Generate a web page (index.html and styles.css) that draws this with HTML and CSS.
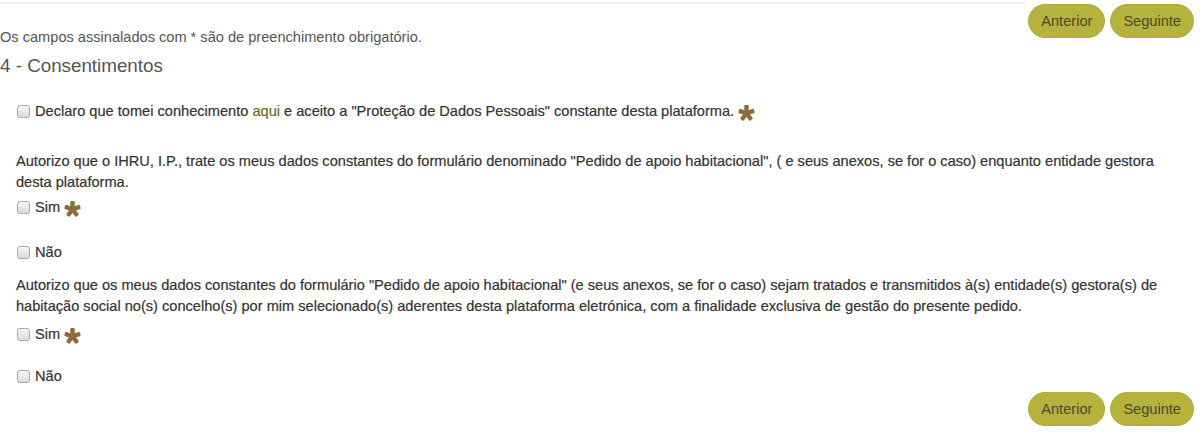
FILE: index.html
```html
<!DOCTYPE html>
<html lang="pt">
<head>
<meta charset="utf-8">
<title>Consentimentos</title>
<link rel="stylesheet" href="styles.css">
</head>
<body>
<div class="page">
  <div class="top">
    <div class="top-main">
      <div class="rule"></div>
      <p class="note">Os campos assinalados com * são de preenchimento obrigatório.</p>
    </div>
    <div class="nav">
      <button class="btn">Anterior</button>
      <button class="btn">Seguinte</button>
    </div>
  </div>

  <h4 class="section-title">4 - Consentimentos</h4>

  <div class="fields">
    <label class="check check-first"><input type="checkbox" class="box">Declaro que tomei conhecimento <a class="link" href="#">aqui</a> e aceito a "Proteção de Dados Pessoais" constante desta plataforma. <svg class="star" viewBox="0 0 20 20" aria-hidden="true"><g transform="translate(10 10.8)"><rect x="-2.6" y="-9.6" width="5.2" height="10" rx="1.4"/><rect x="-2.6" y="-9.6" width="5.2" height="10" rx="1.4" transform="rotate(72)"/><rect x="-2.6" y="-9.6" width="5.2" height="10" rx="1.4" transform="rotate(144)"/><rect x="-2.6" y="-9.6" width="5.2" height="10" rx="1.4" transform="rotate(216)"/><rect x="-2.6" y="-9.6" width="5.2" height="10" rx="1.4" transform="rotate(288)"/></g></svg></label>

    <p class="question q-first">Autorizo que o IHRU, I.P., trate os meus dados constantes do formulário denominado "Pedido de apoio habitacional", ( e seus anexos, se for o caso) enquanto entidade gestora desta plataforma.</p>
    <label class="check check-yes"><input type="checkbox" class="box">Sim <svg class="star" viewBox="0 0 20 20" aria-hidden="true"><g transform="translate(10 10.8)"><rect x="-2.6" y="-9.6" width="5.2" height="10" rx="1.4"/><rect x="-2.6" y="-9.6" width="5.2" height="10" rx="1.4" transform="rotate(72)"/><rect x="-2.6" y="-9.6" width="5.2" height="10" rx="1.4" transform="rotate(144)"/><rect x="-2.6" y="-9.6" width="5.2" height="10" rx="1.4" transform="rotate(216)"/><rect x="-2.6" y="-9.6" width="5.2" height="10" rx="1.4" transform="rotate(288)"/></g></svg></label>
    <label class="check check-no"><input type="checkbox" class="box">Não</label>

    <p class="question q-second">Autorizo que os meus dados constantes do formulário "Pedido de apoio habitacional" (e seus anexos, se for o caso) sejam tratados e transmitidos à(s) entidade(s) gestora(s) de habitação social no(s) concelho(s) por mim selecionado(s) aderentes desta plataforma eletrónica, com a finalidade exclusiva de gestão do presente pedido.</p>
    <label class="check check-yes check-yes-2"><input type="checkbox" class="box">Sim <svg class="star" viewBox="0 0 20 20" aria-hidden="true"><g transform="translate(10 10.8)"><rect x="-2.6" y="-9.6" width="5.2" height="10" rx="1.4"/><rect x="-2.6" y="-9.6" width="5.2" height="10" rx="1.4" transform="rotate(72)"/><rect x="-2.6" y="-9.6" width="5.2" height="10" rx="1.4" transform="rotate(144)"/><rect x="-2.6" y="-9.6" width="5.2" height="10" rx="1.4" transform="rotate(216)"/><rect x="-2.6" y="-9.6" width="5.2" height="10" rx="1.4" transform="rotate(288)"/></g></svg></label>
    <label class="check check-no check-no-2"><input type="checkbox" class="box">Não</label>
  </div>

  <div class="nav nav-bottom">
    <button class="btn">Anterior</button>
    <button class="btn">Seguinte</button>
  </div>
</div>
</body>
</html>
```

FILE: styles.css
```css
html, body {
  margin: 0;
  padding: 0;
  background: #fff;
}

body {
  font-family: "Liberation Sans", Arial, sans-serif;
  font-size: 14.6px;
  line-height: 21px;
  color: #333;
}

.page {
  padding: 0 6px 0 0;
}

.top {
  display: flex;
  align-items: flex-start;
}

.top-main {
  flex: 1;
}

.rule {
  margin-top: 2px;
  height: 2px;
  background: #efefef;
}

.note {
  margin: 24px 0 0;
  font-size: 14.6px;
  line-height: 18px;
  color: #555;
}

.nav {
  display: flex;
  justify-content: flex-end;
  gap: 5px;
  margin: 4px 0 0 2px;
}

.nav-bottom {
  margin-top: 5px;
}

.btn {
  font-family: "Liberation Sans", Arial, sans-serif;
  font-size: 14.6px;
  line-height: 20px;
  height: 34px;
  padding: 6px 12px;
  border: 1px solid #b0ad3a;
  border-radius: 17px;
  background: #b5b23d;
  color: #4a4a2c;
  cursor: pointer;
}

.section-title {
  margin: 10px 0 0;
  font-size: 18.8px;
  line-height: 20px;
  font-weight: normal;
  color: #555;
}

.fields {
  padding: 0 15px 0 16px;
  -webkit-text-stroke: 0.2px #333;
}

.check {
  display: block;
  line-height: 21px;
}

.check-first {
  margin-top: 25px;
}

.check-yes {
  margin-top: 4px;
}

.check-yes-2 {
  margin-top: 7px;
}

.check-no {
  margin-top: 24px;
}

.check-no-2 {
  margin-top: 21px;
}

.question {
  margin: 0;
}

.q-first {
  margin-top: 29px;
}

.q-second {
  margin-top: 12px;
}

.box {
  -webkit-appearance: none;
  appearance: none;
  box-sizing: border-box;
  width: 13px;
  height: 13px;
  margin: 0 5px 0 1px;
  vertical-align: -2px;
  border: 1px solid #a9a9a9;
  border-radius: 3px;
  background: linear-gradient(#f4f4f4, #dcdcdc);
}

.link {
  color: #6e6c1c;
  -webkit-text-stroke: 0.2px #6e6c1c;
  text-decoration: none;
}

.star {
  display: inline-block;
  width: 17px;
  height: 17px;
  vertical-align: -5px;
  fill: #8a6d3b;
}
```
